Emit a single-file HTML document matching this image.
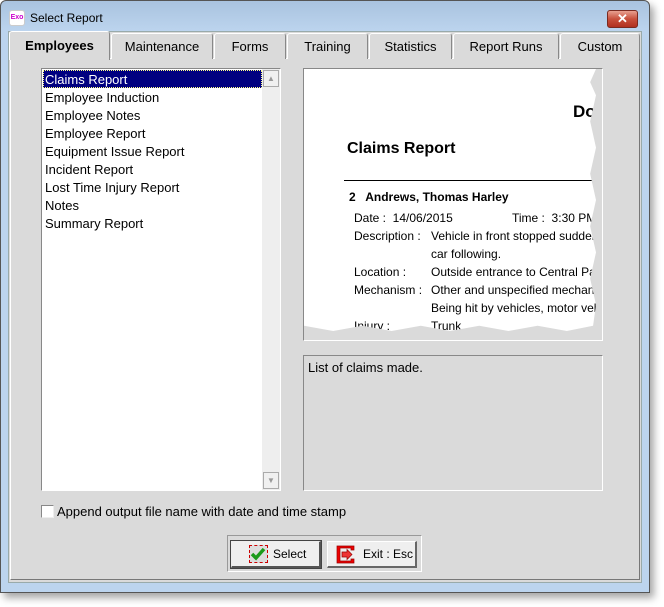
<!DOCTYPE html>
<html><head><meta charset="utf-8"><style>
*{box-sizing:border-box;margin:0;padding:0}
body{width:664px;height:607px;background:#fff;position:relative;overflow:hidden;font-family:"Liberation Sans",sans-serif;font-size:13px;color:#000}
.a{position:absolute}
.win{left:0;top:0;width:650px;height:593px;border:1px solid #555;border-radius:6px 6px 0 0;background:linear-gradient(#a9c3df,#bcd4ee 30px,#bcd4ee);box-shadow:4px 5px 8px rgba(0,0,0,.35)}
.client{left:8px;top:31px;width:634px;height:552px;background:#dadada;border:1px solid #9aa;}
.tab{top:33px;height:26px;background:#dadada;border:1px solid #888;border-bottom:none;border-top-color:#fff;border-left-color:#fff;border-radius:3px 3px 0 0;text-align:center;line-height:26px;font-size:13px}
.panel{left:10px;top:58px;width:630px;height:522px;border:1px solid #fff;border-right-color:#777;border-bottom-color:#777}
.sunk{border:1px solid #888;border-right-color:#fff;border-bottom-color:#fff}
</style></head><body>
<div class="a win"></div>
<div class="a" style="left:9px;top:10px;width:16px;height:16px;background:#fff;border:1px solid #ccc;border-radius:3px;font-size:7px;color:#c0c;line-height:14px;text-align:center;font-weight:bold">Exo</div>
<div class="a" style="left:30px;top:11px;font-size:12px">Select Report</div>
<div class="a" style="left:607px;top:10px;width:31px;height:18px;border:1px solid #7a2a20;border-radius:3px;background:linear-gradient(#e8a090,#c8503c 50%,#b03020);color:#fff;font-weight:bold;text-align:center;line-height:16px;font-size:13px">✕</div>
<div class="a client"></div>
<div class="a panel"></div>
<div class="a tab" style="left:111px;width:102px">Maintenance</div>
<div class="a tab" style="left:214px;width:72px">Forms</div>
<div class="a tab" style="left:287px;width:81px">Training</div>
<div class="a tab" style="left:369px;width:83px">Statistics</div>
<div class="a tab" style="left:453px;width:106px">Report Runs</div>
<div class="a tab" style="left:560px;width:80px">Custom</div>
<div class="a tab" style="left:9px;top:31px;width:101px;height:29px;font-weight:bold;line-height:28px;border-bottom:none">Employees</div>
<div class="a sunk" style="left:41px;top:68px;width:240px;height:423px;background:#fff"></div>
<div class="a" style="left:262px;top:69px;width:18px;height:421px;background:#eee"></div>
<div class="a" style="left:263px;top:70px;width:16px;height:17px;background:#f0f0f0;border:1px solid #aaa;font-size:8px;color:#999;text-align:center;line-height:15px">▲</div>
<div class="a" style="left:263px;top:472px;width:16px;height:17px;background:#f0f0f0;border:1px solid #aaa;font-size:8px;color:#999;text-align:center;line-height:15px">▼</div>
<div class="a" style="left:43px;top:70px;width:219px;height:18px;background:#000080;border:1px dotted #ff8"></div>
<div class="a" style="left:45px;top:71px;line-height:18px;font-size:13px">
<div style="color:#fff">Claims Report</div><div>Employee Induction</div><div>Employee Notes</div><div>Employee Report</div><div>Equipment Issue Report</div><div>Incident Report</div><div>Lost Time Injury Report</div><div>Notes</div><div>Summary Report</div></div>
<div class="a sunk" style="left:303px;top:68px;width:300px;height:273px;background:#dadada"></div>
<div class="a" style="left:304px;top:69px;width:292px;height:262px;background:#fff;clip-path:polygon(0 0,100% 0,98% 5%,100% 10%,98% 20%,100% 30%,98% 40%,100% 50%,98% 60%,100% 70%,98% 80%,100% 90%,99% 98%,90% 100%,80% 98%,70% 100%,60% 98%,50% 100%,40% 98%,30% 100%,20% 98%,10% 100%,0 98%);overflow:hidden;white-space:nowrap">
<div class="a" style="left:269px;top:33px;font-weight:bold;font-size:17px">Do</div>
<div class="a" style="left:43px;top:71px;font-weight:bold;font-size:16px">Claims Report</div>
<div class="a" style="left:40px;top:111px;width:260px;border-top:1px solid #000"></div>
<div class="a" style="left:45px;top:121px;font-weight:bold;font-size:12px">2&nbsp;&nbsp; Andrews, Thomas Harley</div>
<div class="a" style="left:50px;top:140px;font-size:12px;line-height:18px">Date :&nbsp; 14/06/2015<br>Description :<br><br>Location :<br>Mechanism :<br><br>Injury :</div>
<div class="a" style="left:208px;top:140px;font-size:12px;line-height:18px">Time :&nbsp; 3:30 PM</div>
<div class="a" style="left:127px;top:158px;font-size:12px;line-height:18px">Vehicle in front stopped suddenly<br>car following.<br>Outside entrance to Central Park<br>Other and unspecified mechanism<br>Being hit by vehicles, motor vehicle<br>Trunk</div>
</div>
<div class="a sunk" style="left:303px;top:355px;width:300px;height:136px"></div>
<div class="a" style="left:308px;top:360px;font-size:13px">List of claims made.</div>
<div class="a" style="left:41px;top:505px;width:13px;height:13px;background:#fff;border:1px solid #888;border-right-color:#eee;border-bottom-color:#eee"></div>
<div class="a" style="left:57px;top:504px;font-size:13px">Append output file name with date and time stamp</div>
<div class="a" style="left:227px;top:535px;width:195px;height:37px;border:1px solid #999;border-right-color:#fff;border-bottom-color:#fff"></div>
<div class="a" style="left:231px;top:541px;width:90px;height:27px;background:#efefef;border:1px solid #eee;border-right:2px solid #555;border-bottom:2px solid #555;outline:1px solid #444"></div>
<div class="a" style="left:249px;top:545px;width:19px;height:18px;border:1px dashed #c00;background:#ddd"><svg width="17" height="16" viewBox="0 0 17 16"><path d="M2 8 L6 12 L14 3" stroke="#1a9a1a" stroke-width="3.5" fill="none"/></svg></div>
<div class="a" style="left:273px;top:547px;font-size:12px">Select</div>
<div class="a" style="left:327px;top:541px;width:90px;height:27px;background:#efefef;border:1px solid #fff;border-right:2px solid #666;border-bottom:2px solid #666"></div>
<div class="a" style="left:336px;top:545px;width:19px;height:19px"><svg width="19" height="19" viewBox="0 0 19 19"><path d="M1 1 H18 V5 H15 V3 H4 V16 H15 V14 H18 V18 H1 Z" fill="#e00" stroke="#900" stroke-width=".7"/><path d="M6 7 H11 V4.5 L16 9.5 L11 14.5 V12 H6 Z" fill="#e33" stroke="#900" stroke-width=".7"/></svg></div>
<div class="a" style="left:363px;top:547px;font-size:12px">Exit : Esc</div>
</body></html>
